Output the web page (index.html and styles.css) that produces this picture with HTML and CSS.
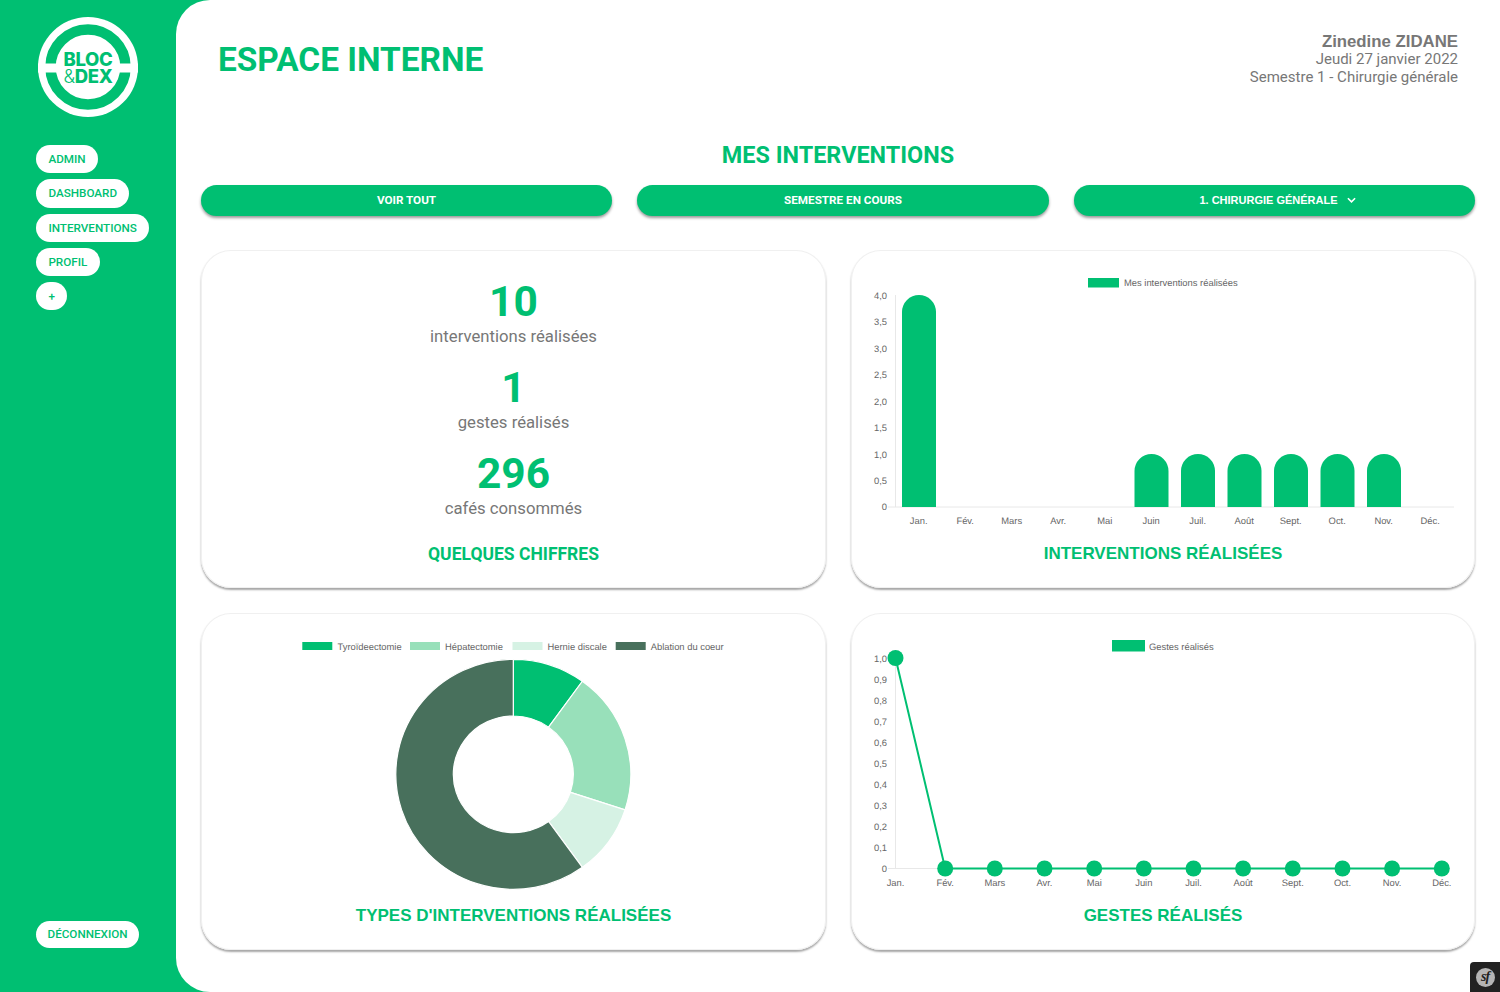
FILE: index.html
```html
<!DOCTYPE html>
<html lang="fr">
<head>
<meta charset="utf-8">
<title>Bloc &amp; Dex - Espace interne</title>
<link rel="stylesheet" href="styles.css">
</head>
<body>
<div class="app">
  <aside class="sidebar">
    <svg class="logo" viewBox="0 0 100 100" aria-label="Bloc et Dex">
      <circle cx="50" cy="50" r="50" fill="#fff"/>
      <circle cx="50" cy="50" r="37.5" fill="none" stroke="#00bf72" stroke-width="10.5"/>
      <rect x="0" y="46.5" width="100" height="9" fill="#fff"/>
      <text class="logo-text" x="50" y="48.7" text-anchor="middle">BLOC</text>
      <text class="logo-text" x="50" y="66.3" text-anchor="middle"><tspan class="logo-amp">&amp;</tspan>DEX</text>
    </svg>
    <nav class="nav">
      <a class="pill">ADMIN</a>
      <a class="pill">DASHBOARD</a>
      <a class="pill">INTERVENTIONS</a>
      <a class="pill">PROFIL</a>
      <a class="pill">+</a>
    </nav>
    <a class="pill pill-logout">DÉCONNEXION</a>
  </aside>
  <main class="main">
    <header class="header">
      <h1 class="page-title">ESPACE INTERNE</h1>
      <div class="user">
        <div class="user-name">Zinedine ZIDANE</div>
        <div>Jeudi 27 janvier 2022</div>
        <div>Semestre 1 - Chirurgie générale</div>
      </div>
    </header>
    <h2 class="section-title">MES INTERVENTIONS</h2>
    <div class="filters">
      <button class="filter filter-a">VOIR TOUT</button>
      <button class="filter filter-m">SEMESTRE EN COURS</button>
      <button class="filter filter-b">1. CHIRURGIE GÉNÉRALE
        <svg class="chev" viewBox="0 0 10 6"><path d="M1 1l4 4 4-4" fill="none" stroke="#fff" stroke-width="1.8"/></svg>
      </button>
    </div>
    <section class="grid">
      <article class="card">
        <div class="stats">
          <div class="stat"><div class="stat-num">10</div><div class="stat-label">interventions réalisées</div></div>
          <div class="stat"><div class="stat-num">1</div><div class="stat-label">gestes réalisés</div></div>
          <div class="stat"><div class="stat-num">296</div><div class="stat-label">cafés consommés</div></div>
        </div>
        <h3 class="card-title card-title-r">QUELQUES CHIFFRES</h3>
      </article>

      <article class="card">
        <svg class="chart" viewBox="851 260 624 276">
          <rect x="1088" y="278" width="31" height="9.5" fill="#00bf72"/>
          <text class="lbl" x="1124" y="286">Mes interventions réalisées</text>
          <path d="M895.5 295V507M888 507H1454" class="axis"/>
          <g text-anchor="end">
            <text class="lbl" x="887" y="299">4,0</text>
            <text class="lbl" x="887" y="325">3,5</text>
            <text class="lbl" x="887" y="352">3,0</text>
            <text class="lbl" x="887" y="378">2,5</text>
            <text class="lbl" x="887" y="405">2,0</text>
            <text class="lbl" x="887" y="431">1,5</text>
            <text class="lbl" x="887" y="458">1,0</text>
            <text class="lbl" x="887" y="484">0,5</text>
            <text class="lbl" x="887" y="510">0</text>
          </g>
          <g fill="#00bf72">
            <path d="M902 507V312a17 17 0 0 1 34 0V507Z"/>
            <path d="M1134.5 507V471a17 17 0 0 1 34 0V507Z"/>
            <path d="M1181 507V471a17 17 0 0 1 34 0V507Z"/>
            <path d="M1227.5 507V471a17 17 0 0 1 34 0V507Z"/>
            <path d="M1274 507V471a17 17 0 0 1 34 0V507Z"/>
            <path d="M1320.5 507V471a17 17 0 0 1 34 0V507Z"/>
            <path d="M1367 507V471a17 17 0 0 1 34 0V507Z"/>
          </g>
          <g text-anchor="middle">
            <text class="lbl" x="918.7" y="524">Jan.</text>
            <text class="lbl" x="965.2" y="524">Fév.</text>
            <text class="lbl" x="1011.7" y="524">Mars</text>
            <text class="lbl" x="1058.2" y="524">Avr.</text>
            <text class="lbl" x="1104.7" y="524">Mai</text>
            <text class="lbl" x="1151.2" y="524">Juin</text>
            <text class="lbl" x="1197.7" y="524">Juil.</text>
            <text class="lbl" x="1244.2" y="524">Août</text>
            <text class="lbl" x="1290.7" y="524">Sept.</text>
            <text class="lbl" x="1337.2" y="524">Oct.</text>
            <text class="lbl" x="1383.7" y="524">Nov.</text>
            <text class="lbl" x="1430.2" y="524">Déc.</text>
          </g>
        </svg>
        <h3 class="card-title">INTERVENTIONS RÉALISÉES</h3>
      </article>

      <article class="card">
        <svg class="chart" viewBox="201 623 625 276">
          <rect x="302.3" y="642" width="30" height="8" fill="#00bf72"/>
          <text class="lbl" x="337.5" y="650">Tyroïdeectomie</text>
          <rect x="410" y="642" width="30" height="8" fill="#98e0ba"/>
          <text class="lbl" x="445" y="650">Hépatectomie</text>
          <rect x="512.5" y="642" width="30" height="8" fill="#d6f2e4"/>
          <text class="lbl" x="547.5" y="650">Hernie discale</text>
          <rect x="615.7" y="642" width="30" height="8" fill="#48705c"/>
          <text class="lbl" x="650.7" y="650">Ablation du coeur</text>
          <g stroke="#fff" stroke-width="1.2">
            <path fill="#00bf72" d="M513.3 659.3A117.5 115 0 0 1 582.37 681.26L548.57 727.13A60 58.3 0 0 0 513.3 716Z"/>
            <path fill="#98e0ba" d="M582.37 681.26A117.5 115 0 0 1 625.05 809.84L570.37 792.32A60 58.3 0 0 0 548.57 727.13Z"/>
            <path fill="#d6f2e4" d="M625.05 809.84A117.5 115 0 0 1 582.37 867.34L548.57 821.47A60 58.3 0 0 0 570.37 792.32Z"/>
            <path fill="#48705c" d="M582.37 867.34A117.5 115 0 1 1 513.3 659.3L513.3 716A60 58.3 0 1 0 548.57 821.47Z"/>
          </g>
        </svg>
        <h3 class="card-title">TYPES D'INTERVENTIONS RÉALISÉES</h3>
      </article>

      <article class="card">
        <svg class="chart" viewBox="851 623 624 276">
          <rect x="1112" y="640" width="33" height="11.5" fill="#00bf72"/>
          <text class="lbl" x="1149" y="650">Gestes réalisés</text>
          <path d="M895.5 658V868.5M888 868.5H1442" class="axis"/>
          <g text-anchor="end">
            <text class="lbl" x="887" y="662">1,0</text>
            <text class="lbl" x="887" y="683">0,9</text>
            <text class="lbl" x="887" y="704">0,8</text>
            <text class="lbl" x="887" y="725">0,7</text>
            <text class="lbl" x="887" y="746">0,6</text>
            <text class="lbl" x="887" y="767">0,5</text>
            <text class="lbl" x="887" y="788.5">0,4</text>
            <text class="lbl" x="887" y="809.5">0,3</text>
            <text class="lbl" x="887" y="830.5">0,2</text>
            <text class="lbl" x="887" y="851.5">0,1</text>
            <text class="lbl" x="887" y="872.5">0</text>
          </g>
          <path d="M895.5 658L945.2 868.5H1442" fill="none" stroke="#00bf72" stroke-width="2"/>
          <g fill="#00bf72">
            <circle cx="895.5" cy="658" r="8"/>
            <circle cx="945.2" cy="868.5" r="8"/>
            <circle cx="994.8" cy="868.5" r="8"/>
            <circle cx="1044.5" cy="868.5" r="8"/>
            <circle cx="1094.2" cy="868.5" r="8"/>
            <circle cx="1143.8" cy="868.5" r="8"/>
            <circle cx="1193.5" cy="868.5" r="8"/>
            <circle cx="1243.1" cy="868.5" r="8"/>
            <circle cx="1292.8" cy="868.5" r="8"/>
            <circle cx="1342.5" cy="868.5" r="8"/>
            <circle cx="1392.1" cy="868.5" r="8"/>
            <circle cx="1441.8" cy="868.5" r="8"/>
          </g>
          <g text-anchor="middle">
            <text class="lbl" x="895.5" y="886">Jan.</text>
            <text class="lbl" x="945.2" y="886">Fév.</text>
            <text class="lbl" x="994.8" y="886">Mars</text>
            <text class="lbl" x="1044.5" y="886">Avr.</text>
            <text class="lbl" x="1094.2" y="886">Mai</text>
            <text class="lbl" x="1143.8" y="886">Juin</text>
            <text class="lbl" x="1193.5" y="886">Juil.</text>
            <text class="lbl" x="1243.1" y="886">Août</text>
            <text class="lbl" x="1292.8" y="886">Sept.</text>
            <text class="lbl" x="1342.5" y="886">Oct.</text>
            <text class="lbl" x="1392.1" y="886">Nov.</text>
            <text class="lbl" x="1441.8" y="886">Déc.</text>
          </g>
        </svg>
        <h3 class="card-title">GESTES RÉALISÉS</h3>
      </article>
    </section>
  </main>
</div>
<div class="sf-toolbar">
  <span class="sf-badge">sf</span>
</div>
</body>
</html>
```

FILE: styles.css
```css
* { box-sizing: border-box; }
html, body { margin: 0; padding: 0; height: 100%; }
body {
  background: #00bf72;
  font-family: Roboto, "Liberation Sans", sans-serif;
  overflow: hidden;
}
.app { display: flex; height: 992px; }

.sidebar {
  width: 176px;
  flex: none;
  padding: 17px 0 44px 36px;
  display: flex;
  flex-direction: column;
  align-items: flex-start;
}
.logo { width: 100px; height: 100px; margin-left: 2px; display: block; flex: none; }
.logo-text {
  font-family: Inter, Roboto, sans-serif;
  font-weight: 800;
  font-size: 18.5px;
  letter-spacing: -0.3px;
  fill: #00bf72;
}
.logo-amp { font-weight: 300; }
.nav {
  margin-top: 28px;
  display: flex;
  flex-direction: column;
  align-items: flex-start;
  gap: 6px;
  flex: 1;
}
.pill {
  display: block;
  height: 28.3px;
  line-height: 28.3px;
  padding: 0 12.4px;
  background: #fff;
  border-radius: 15px;
  color: #00bf72;
  font-size: 11.7px;
  font-weight: 500;
  white-space: nowrap;
}
.pill-logout { height: 27px; line-height: 27.5px; padding: 0 11.5px; }

.main {
  flex: 1;
  background: #fff;
  border-radius: 34px 0 0 34px;
  padding: 0 25px;
}
.header {
  display: flex;
  justify-content: space-between;
  align-items: flex-start;
  padding: 31px 17px 0;
  height: 141px;
}
.page-title {
  margin: 0;
  font-size: 33.4px;
  line-height: 57px;
  font-weight: 700;
  color: #00bf72;
}
.user {
  text-align: right;
  color: #777;
  font-size: 15px;
  line-height: 18px;
  padding-top: 2px;
}
.user-name {
  font-family: "Liberation Sans", Arial, sans-serif;
  font-size: 16.8px;
  line-height: 17px;
  font-weight: 700;
}
.section-title {
  margin: 0;
  text-align: center;
  font-size: 23.4px;
  line-height: 28px;
  font-weight: 700;
  color: #00bf72;
}
.filters {
  display: flex;
  gap: 25px;
  margin-top: 16px;
}
.filter {
  height: 31px;
  border: 0;
  border-radius: 16px;
  background: #00bf72;
  color: #fff;
  font: 700 11.7px/30px Roboto, sans-serif;
  box-shadow: 0 2px 3px rgba(0, 0, 0, 0.4);
  padding: 0 0 1px;
}
.filter-a { width: 411px; }
.filter-m { width: 412px; }
.filter-b {
  width: 401px;
  padding-left: 6px;
  font-family: "Liberation Sans", Arial, sans-serif;
  font-size: 11px;
}
.chev { width: 9px; height: 6px; margin-left: 6px; vertical-align: 1px; }

.grid {
  display: grid;
  grid-template-columns: 625px 624px;
  grid-auto-rows: 337.5px;
  column-gap: 25px;
  row-gap: 25px;
  margin-top: 34px;
}
.card {
  background: #fff;
  border-radius: 30px;
  box-shadow: inset 0 0 0 1px #f0f0f0, 0 2px 2px rgba(0, 0, 0, 0.35);
  display: flex;
  flex-direction: column;
  align-items: center;
  padding-top: 10px;
}
.chart { width: 100%; height: 276px; display: block; flex: none; }
.lbl {
  font-family: "Liberation Sans", Arial, sans-serif;
  font-size: 9.4px;
  text-rendering: geometricPrecision;
  transform: translateY(-0.5px);
  fill: #666;
}
.axis { fill: none; stroke: #e8e8e8; stroke-width: 1; }
.card-title {
  margin: 5.5px 0 0;
  font-family: "Liberation Sans", Arial, sans-serif;
  font-size: 17px;
  line-height: 24px;
  font-weight: 700;
  color: #00bf72;
  text-align: center;
}
.card-title-r { font-family: Roboto, sans-serif; font-size: 17.5px; }
.stats {
  height: 276px;
  padding-top: 15px;
  display: flex;
  flex-direction: column;
  width: 100%;
}
.stat { text-align: center; height: 86px; flex: none; }
.stat-num {
  font-size: 42.5px;
  line-height: 53px;
  font-weight: 700;
  color: #00bf72;
}
.stat-label {
  font-size: 16.7px;
  line-height: 18px;
  color: #777;
}
.sf-toolbar {
  position: fixed;
  right: 0;
  bottom: 0;
  width: 30px;
  height: 30px;
  background: #222;
  border-top-left-radius: 4px;
  display: flex;
  align-items: center;
  justify-content: center;
}
.sf-badge {
  width: 19px;
  height: 19px;
  border-radius: 50%;
  background: #b5b5b5;
  color: #222;
  font: italic 700 14px/18px "Liberation Serif", serif;
  text-align: center;
  letter-spacing: -1px;
}
```
